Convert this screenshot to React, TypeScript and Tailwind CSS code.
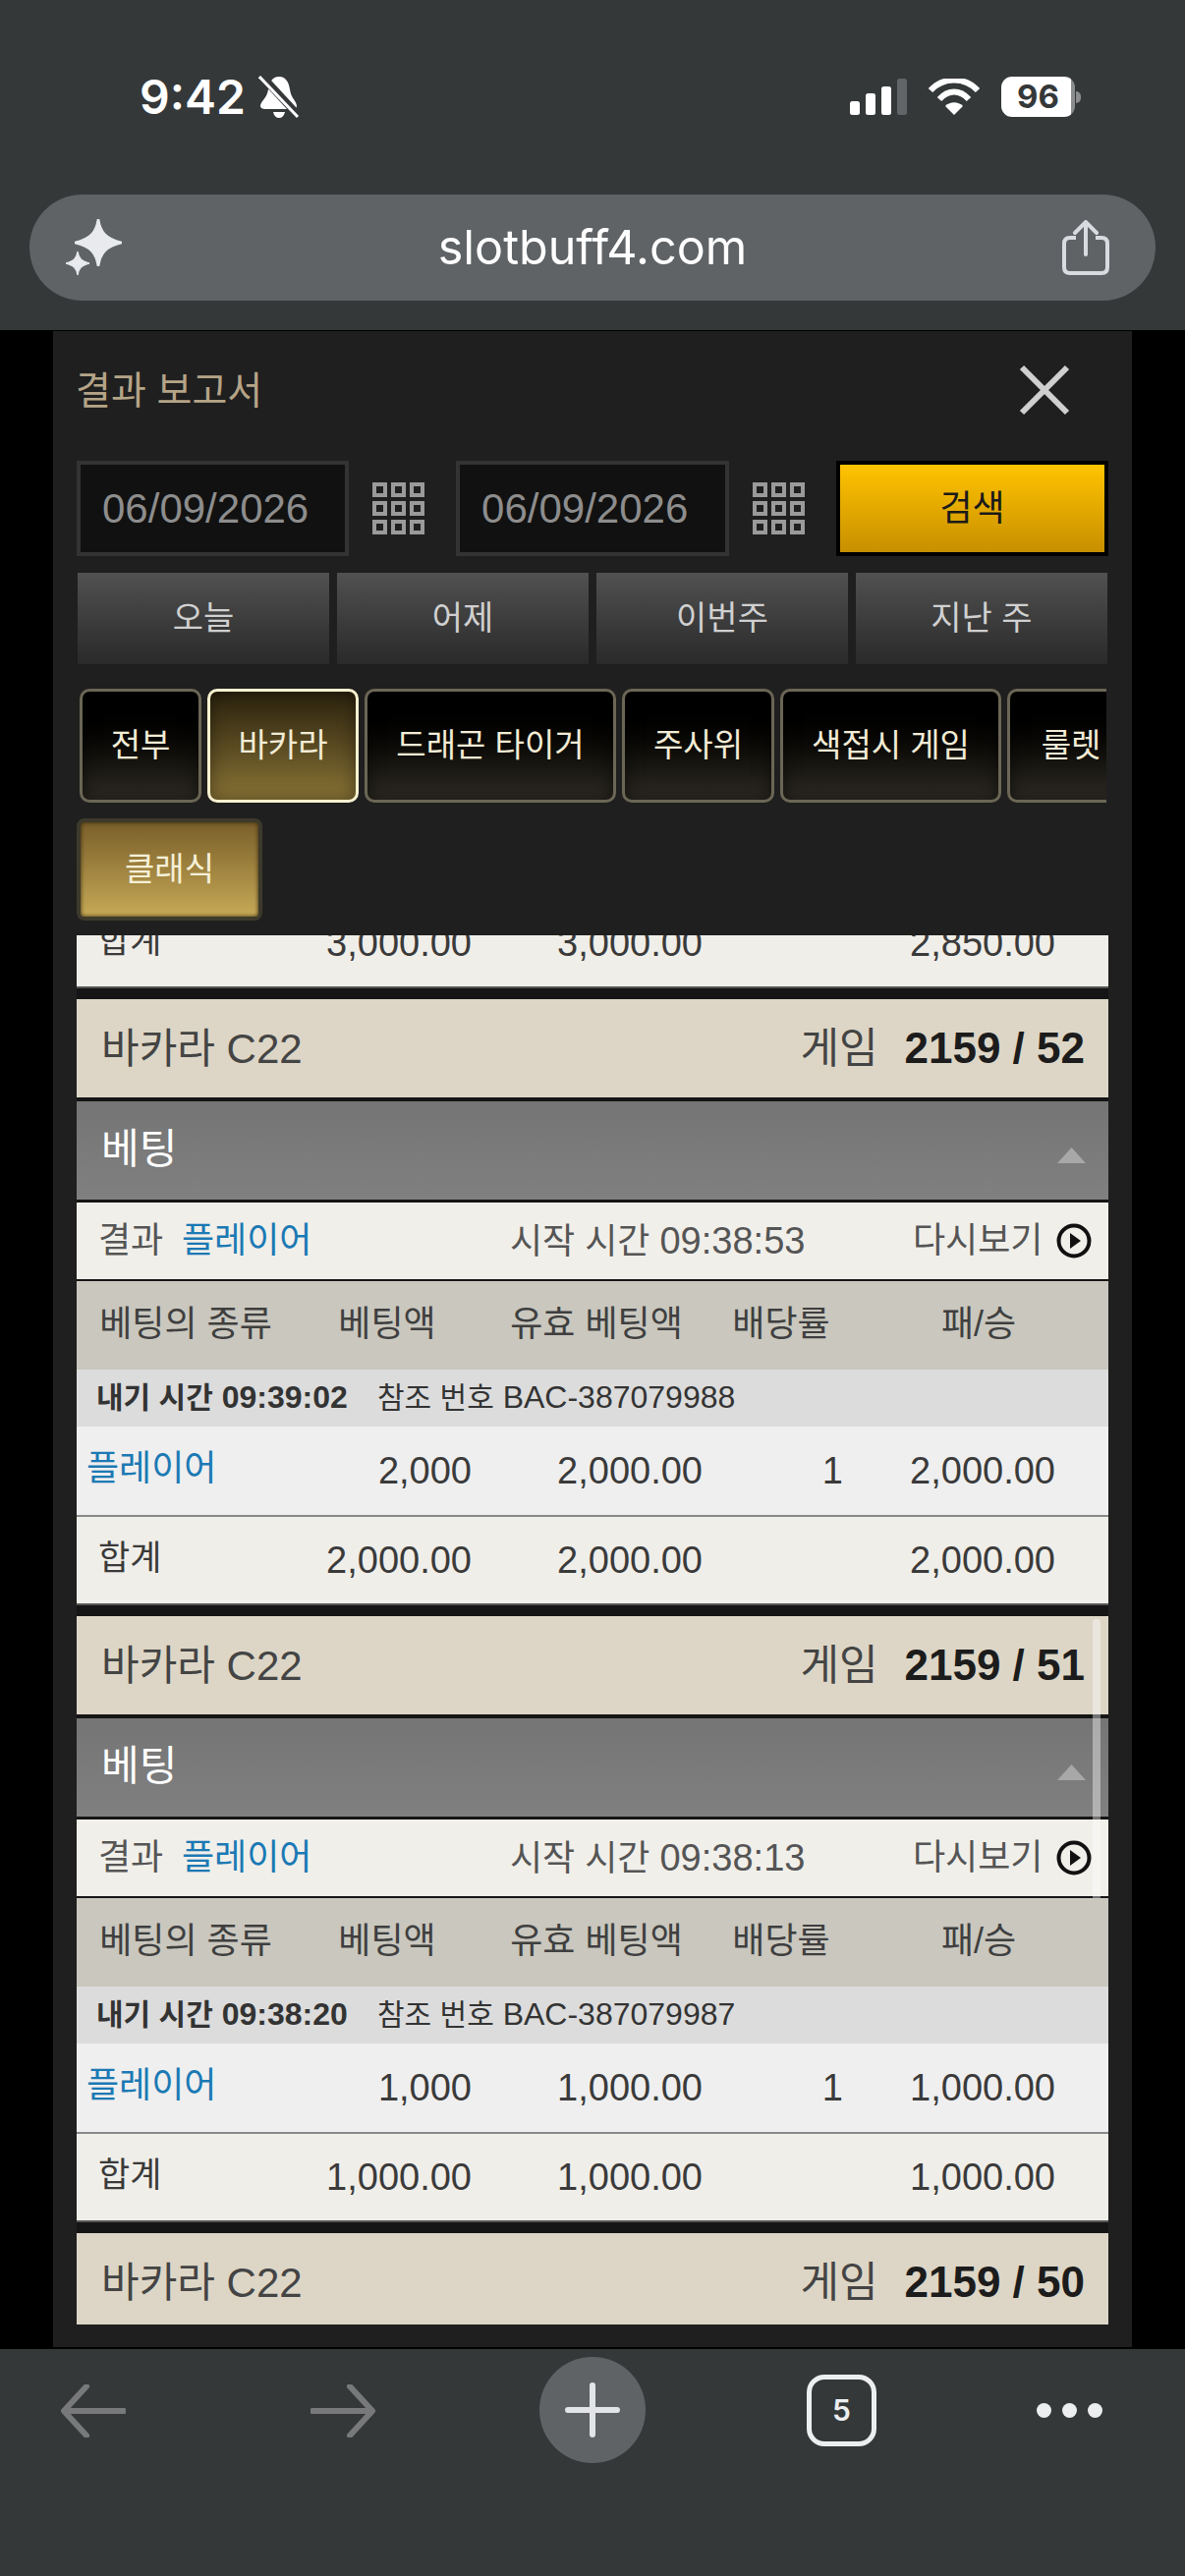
import React from "react";

const FONT = "font-['Liberation_Sans','Noto_Sans_CJK_KR',sans-serif]";

function GridIcon() {
  return (
    <svg width="53" height="53" viewBox="0 0 53 53" className="shrink-0">
      {[0, 19, 38].map((y) =>
        [0, 19, 38].map((x) => (
          <rect key={`${x}-${y}`} x={x + 2} y={y + 2} width="11" height="11" fill="none" stroke="#9a9a9a" strokeWidth="4" />
        ))
      )}
    </svg>
  );
}

function Star({ size }: { size: number }) {
  return (
    <svg width={size} height={size} viewBox="0 0 48 48">
      <path d="M24 0 C26 13 31 20 48 24 C31 28 26 35 24 48 C22 35 17 28 0 24 C17 20 22 13 24 0Z" fill="#e8eaee" stroke="#e8eaee" strokeWidth="2.5" strokeLinejoin="round" />
    </svg>
  );
}

function GameHeader({ no }: { no: string }) {
  return (
    <div className="h-[100px] bg-[#ddd6c6] flex items-center justify-between pl-[25px] pr-[24px]">
      <span className="text-[42px] text-[#444444]">바카라 C22</span>
      <span className="flex items-center gap-[27px]">
        <span className="text-[43px] text-[#444444]">게임</span>
        <span className="text-[44px] font-bold text-[#1c1c1c]">{no}</span>
      </span>
    </div>
  );
}

const ROW = "grid grid-cols-[222px_188px_238px_138px_264px] items-center";

function TotalRow({ a, b, c }: { a: string; b: string; c: string }) {
  return (
    <div className={`${ROW} h-[90px] bg-[#f0eee9] text-[38px] text-[#3a3a3a] border-b-2 border-[#555555]`}>
      <span className="pl-[22px] text-[35px] -translate-y-[2px]">합계</span>
      <span className="text-right pr-[8px]">{a}</span>
      <span className="text-right pr-[11px]">{b}</span>
      <span />
      <span className="text-right pr-[54px]">{c}</span>
    </div>
  );
}

function Block(props: { no: string; start: string; bet: string; ref_: string; stake: string; amt: string }) {
  return (
    <div className="mt-[11px]">
      <GameHeader no={props.no} />
      <div className="mt-[4px] h-[100px] bg-gradient-to-b from-[#757575] to-[#808080] relative flex items-center pl-[25px]">
        <span className="text-[42px] text-white -translate-y-[2px]">베팅</span>
        <svg width="29" height="16" viewBox="0 0 29 16" className="absolute right-[23px] top-[47px]">
          <path d="M14.5 0 L29 16 H0Z" fill="#a8a8a8" />
        </svg>
      </div>
      <div className="mt-[3px] h-[78px] bg-[#f1efea] flex items-center relative text-[36px] text-[#555555]">
        <span className="ml-[22px] w-[85px]">결과</span>
        <span className="text-[#1b79b4] w-[334px]">플레이어</span>
        <span className="w-[410px]">시작 시간 <span className="text-[38px]">{props.start}</span></span>
        <span>다시보기</span>
        <svg width="36" height="36" viewBox="0 0 36 36" className="ml-[14px]">
          <circle cx="18" cy="18" r="15.5" fill="none" stroke="#111" strokeWidth="4" />
          <path d="M14 10 L25 18 L14 26Z" fill="#111" />
        </svg>
      </div>
      <div className={`${ROW} mt-[2px] h-[90px] bg-[#c9c7be] text-[36px] text-[#3f3f3f] text-center`}>
        <span className="-translate-y-[1px]">베팅의 종류</span>
        <span className="-translate-y-[1px]">베팅액</span>
        <span className="-translate-y-[1px]">유효 베팅액</span>
        <span className="-translate-y-[1px]">배당률</span>
        <span className="-translate-y-[1px]">패/승</span>
      </div>
      <div className="h-[58px] bg-[#dcdcdc] flex items-center text-[32px] text-[#333333] pl-[20px]">
        <span className="font-bold w-[286px] -translate-y-[1px]">
          <span className="text-[30px]">내기 시간</span> {props.bet}
        </span>
        <span className="-translate-y-[1px]">
          <span className="text-[30px]">참조 번호</span> {props.ref_}
        </span>
      </div>
      <div className={`${ROW} h-[92px] bg-[#efefef] text-[38px] text-[#3a3a3a] border-b-2 border-[#888888]`}>
        <span className="pl-[10px] text-[36px] text-[#1b79b4] -translate-y-[2px]">플레이어</span>
        <span className="text-right pr-[8px]">{props.stake}</span>
        <span className="text-right pr-[11px]">{props.amt}</span>
        <span className="text-right pr-[6px]">1</span>
        <span className="text-right pr-[54px]">{props.amt}</span>
      </div>
      <TotalRow a={props.amt} b={props.amt} c={props.amt} />
    </div>
  );
}

function Tab({ label, w, active }: { label: string; w: string; active?: boolean }) {
  return (
    <div
      className={`${w} shrink-0 h-[116px] rounded-[10px] border-[3px] flex items-center justify-center text-[33px] text-[#f3ecd6] ${
        active
          ? "border-[#f8f1d0] bg-gradient-to-b from-[#2c230e] to-[#8a7436] shadow-[inset_0_0_18px_rgba(0,0,0,0.4)]"
          : "border-[#6b6655] bg-gradient-to-b from-[#000000] to-[#2f2c24] shadow-[inset_0_0_18px_rgba(0,0,0,0.55)]"
      }`}
    >
      {label}
    </div>
  );
}

function QuickBtn({ label }: { label: string }) {
  return (
    <div className="flex-1 h-[93px] bg-gradient-to-b from-[#515151] to-[#2a2a2a] flex items-center justify-center text-[34px] text-[#d0d0d0]">
      {label}
    </div>
  );
}

function DateBox() {
  return (
    <div className="w-[278px] h-[97px] bg-[#111111] border-[4px] border-[#333333] flex items-center pl-[22px] text-[42px] text-[#8d8d8d]">
      06/09/2026
    </div>
  );
}

export default function App() {
  return (
    <div className={`w-[1206px] h-[2622px] overflow-hidden flex flex-col bg-black ${FONT}`}>
      {/* browser top */}
      <div className="h-[337px] shrink-0 bg-[#353839] border-b border-black pt-[77px]">
        <div className="h-[43px] flex items-center justify-between pl-[142px] pr-[106px]">
          <div className="flex items-center gap-[13px]">
            <span className="font-['Inter',sans-serif] text-[48px] leading-none font-semibold text-white">9:42</span>
            <svg width="42" height="44" viewBox="0 0 42 44">
              <path d="M21 1 C28 1 31 7 32 14 C33 23 39 26 39 31 C39 33 37 34 35 34 H7 C4 34 2 33 2 31 C2 26 9 23 10 14 C11 7 14 1 21 1Z" fill="#fff" />
              <path d="M15 37 H27 C26 41 24 43 21 43 C18 43 16 41 15 37Z" fill="#fff" />
              <path d="M3 0 L40 40" stroke="#353839" strokeWidth="8" />
              <path d="M1 1 L40 42" stroke="#fff" strokeWidth="3" />
            </svg>
          </div>
          <div className="flex items-center">
            <svg width="58" height="37" viewBox="0 0 58 37">
              <rect x="0" y="23" width="10" height="14" rx="2.5" fill="#fff" />
              <rect x="16" y="15" width="10" height="22" rx="2.5" fill="#fff" />
              <rect x="32" y="8" width="10" height="29" rx="2.5" fill="#fff" />
              <rect x="48" y="0" width="10" height="37" rx="2.5" fill="#626567" />
            </svg>
            <svg width="52" height="38" viewBox="0 0 52 38" className="ml-[22px]">
              <path d="M2 12 C15 -2 37 -2 50 12" fill="none" stroke="#fff" strokeWidth="6" />
              <path d="M11 21 C20 11 32 11 41 21" fill="none" stroke="#fff" strokeWidth="6" />
              <path d="M26 37 L17 28 C22 23 30 23 35 28Z" fill="#fff" />
            </svg>
            <div className="ml-[22px] w-[75px] h-[41px] rounded-[11px] bg-gradient-to-r from-white from-[95%] to-[#8b8d8e] to-[95%] flex items-center justify-center font-['Inter',sans-serif] text-[33px] font-bold text-[#353839]">
              96
            </div>
            <div className="ml-[1px] w-[5px] h-[12px] rounded-r-[6px] bg-[#8b8d8e]" />
          </div>
        </div>
        <div className="mt-[78px] mx-[30px] h-[108px] rounded-[54px] bg-[#5f6366] flex items-center justify-between pl-[35px] pr-[47px]">
          <div className="relative w-[60px] h-[60px]">
            <div className="absolute left-[11px] top-[1px] leading-none"><Star size={48} /></div>
            <div className="absolute left-[2px] top-[34px] leading-none"><Star size={24} /></div>
          </div>
          <span className="font-['Inter',sans-serif] text-[48.5px] text-white">slotbuff4.com</span>
          <svg width="48" height="56" viewBox="0 0 48 56">
            <path d="M14 18 H8 C4 18 2 20 2 24 V48 C2 52 4 54 8 54 H40 C44 54 46 52 46 48 V24 C46 20 44 18 40 18 H34" fill="none" stroke="#d8dce0" strokeWidth="4" />
            <path d="M24 35 V3 M13 13 L24 2 L35 13" fill="none" stroke="#d8dce0" strokeWidth="4" strokeLinecap="round" />
          </svg>
        </div>
      </div>

      {/* page */}
      <div className="h-[2052px] shrink-0 mx-[54px] bg-[#1f1f1f] px-[24px] relative">
        <div className="h-[132px] flex items-center justify-between">
          <span className="text-[39px] text-[#b5a487] -translate-y-[5px] -translate-x-[1px]">결과 보고서</span>
          <svg width="52" height="52" viewBox="0 0 52 52" className="mr-[39px] -translate-y-[6px]">
            <path d="M3 3 L49 49 M49 3 L3 49" stroke="#cfcfcf" strokeWidth="6" />
          </svg>
        </div>
        <div className="h-[97px] flex items-center">
          <DateBox />
          <div className="ml-[24px]"><GridIcon /></div>
          <div className="ml-[32px]"><DateBox /></div>
          <div className="ml-[24px]"><GridIcon /></div>
          <div className="ml-[32px] w-[278px] h-[97px] border-[4px] border-black bg-gradient-to-b from-[#ffc400] to-[#c88f00] flex items-center justify-center text-[36px] text-[#1a1a1a]">
            검색
          </div>
        </div>
        <div className="mt-[17px] flex gap-[8px] pl-[1px] pr-[1px]">
          <QuickBtn label="오늘" />
          <QuickBtn label="어제" />
          <QuickBtn label="이번주" />
          <QuickBtn label="지난 주" />
        </div>
        <div className="mt-[25px] w-[1048px] overflow-hidden flex gap-[6px] pl-[3px]">
          <Tab label="전부" w="w-[124px]" />
          <Tab label="바카라" w="w-[154px]" active />
          <Tab label="드래곤 타이거" w="w-[256px]" />
          <Tab label="주사위" w="w-[155px]" />
          <Tab label="색접시 게임" w="w-[225px]" />
          <Tab label="룰렛" w="w-[130px]" />
        </div>
        <div className="mt-[16px] w-[189px] h-[104px] rounded-[8px] border-[4px] border-[#3d3a2c] bg-gradient-to-b from-[#7a5f2a] to-[#c7aa57] shadow-[inset_0_0_4px_#2e2208] flex items-center justify-center text-[33px] text-[#f6f0d8]">
          클래식
        </div>
        <div className="mt-[15px] w-[1050px] h-[1414px] overflow-hidden relative bg-[#151515]">
          <div className="-mt-[36px]">
            <TotalRow a="3,000.00" b="3,000.00" c="2,850.00" />
            <Block no="2159 / 52" start="09:38:53" bet="09:39:02" ref_="BAC-387079988" stake="2,000" amt="2,000.00" />
            <Block no="2159 / 51" start="09:38:13" bet="09:38:20" ref_="BAC-387079987" stake="1,000" amt="1,000.00" />
            <div className="mt-[11px]"><GameHeader no="2159 / 50" /></div>
          </div>
          <div className="absolute left-[1034px] top-[696px] w-[8px] h-[284px] rounded-t-full bg-white/40" />
        </div>
      </div>

      {/* bottom bar */}
      <div className="h-[233px] shrink-0 bg-[#353839] border-t-2 border-black flex items-start pl-[62px] pt-[8px]">
        <svg width="66" height="54" viewBox="0 0 66 54" className="mt-[28px]">
          <path d="M64 27 H6 M26 2 L3 27 L26 52" fill="none" stroke="#77797a" strokeWidth="6" strokeLinecap="round" strokeLinejoin="round" />
        </svg>
        <svg width="66" height="54" viewBox="0 0 66 54" className="mt-[28px] ml-[188px]">
          <path d="M2 27 H60 M40 2 L63 27 L40 52" fill="none" stroke="#77797a" strokeWidth="6" strokeLinecap="round" strokeLinejoin="round" />
        </svg>
        <div className="w-[108px] h-[108px] rounded-full bg-[#5f6366] flex items-center justify-center ml-[167px]">
          <svg width="56" height="56" viewBox="0 0 56 56">
            <path d="M28 3 V53 M3 28 H53" stroke="#e2e4e8" strokeWidth="6" strokeLinecap="round" />
          </svg>
        </div>
        <div className="mt-[18px] ml-[164px] w-[71px] h-[73px] rounded-[18px] border-[5px] border-[#eceef0] flex items-center justify-center font-['Inter',sans-serif] text-[30px] font-semibold text-[#eceef0]">
          5
        </div>
        <div className="mt-[47px] ml-[163px] flex gap-[11px]">
          <div className="w-[15px] h-[15px] rounded-full bg-[#eceef0]" />
          <div className="w-[15px] h-[15px] rounded-full bg-[#eceef0]" />
          <div className="w-[15px] h-[15px] rounded-full bg-[#eceef0]" />
        </div>
      </div>
    </div>
  );
}
